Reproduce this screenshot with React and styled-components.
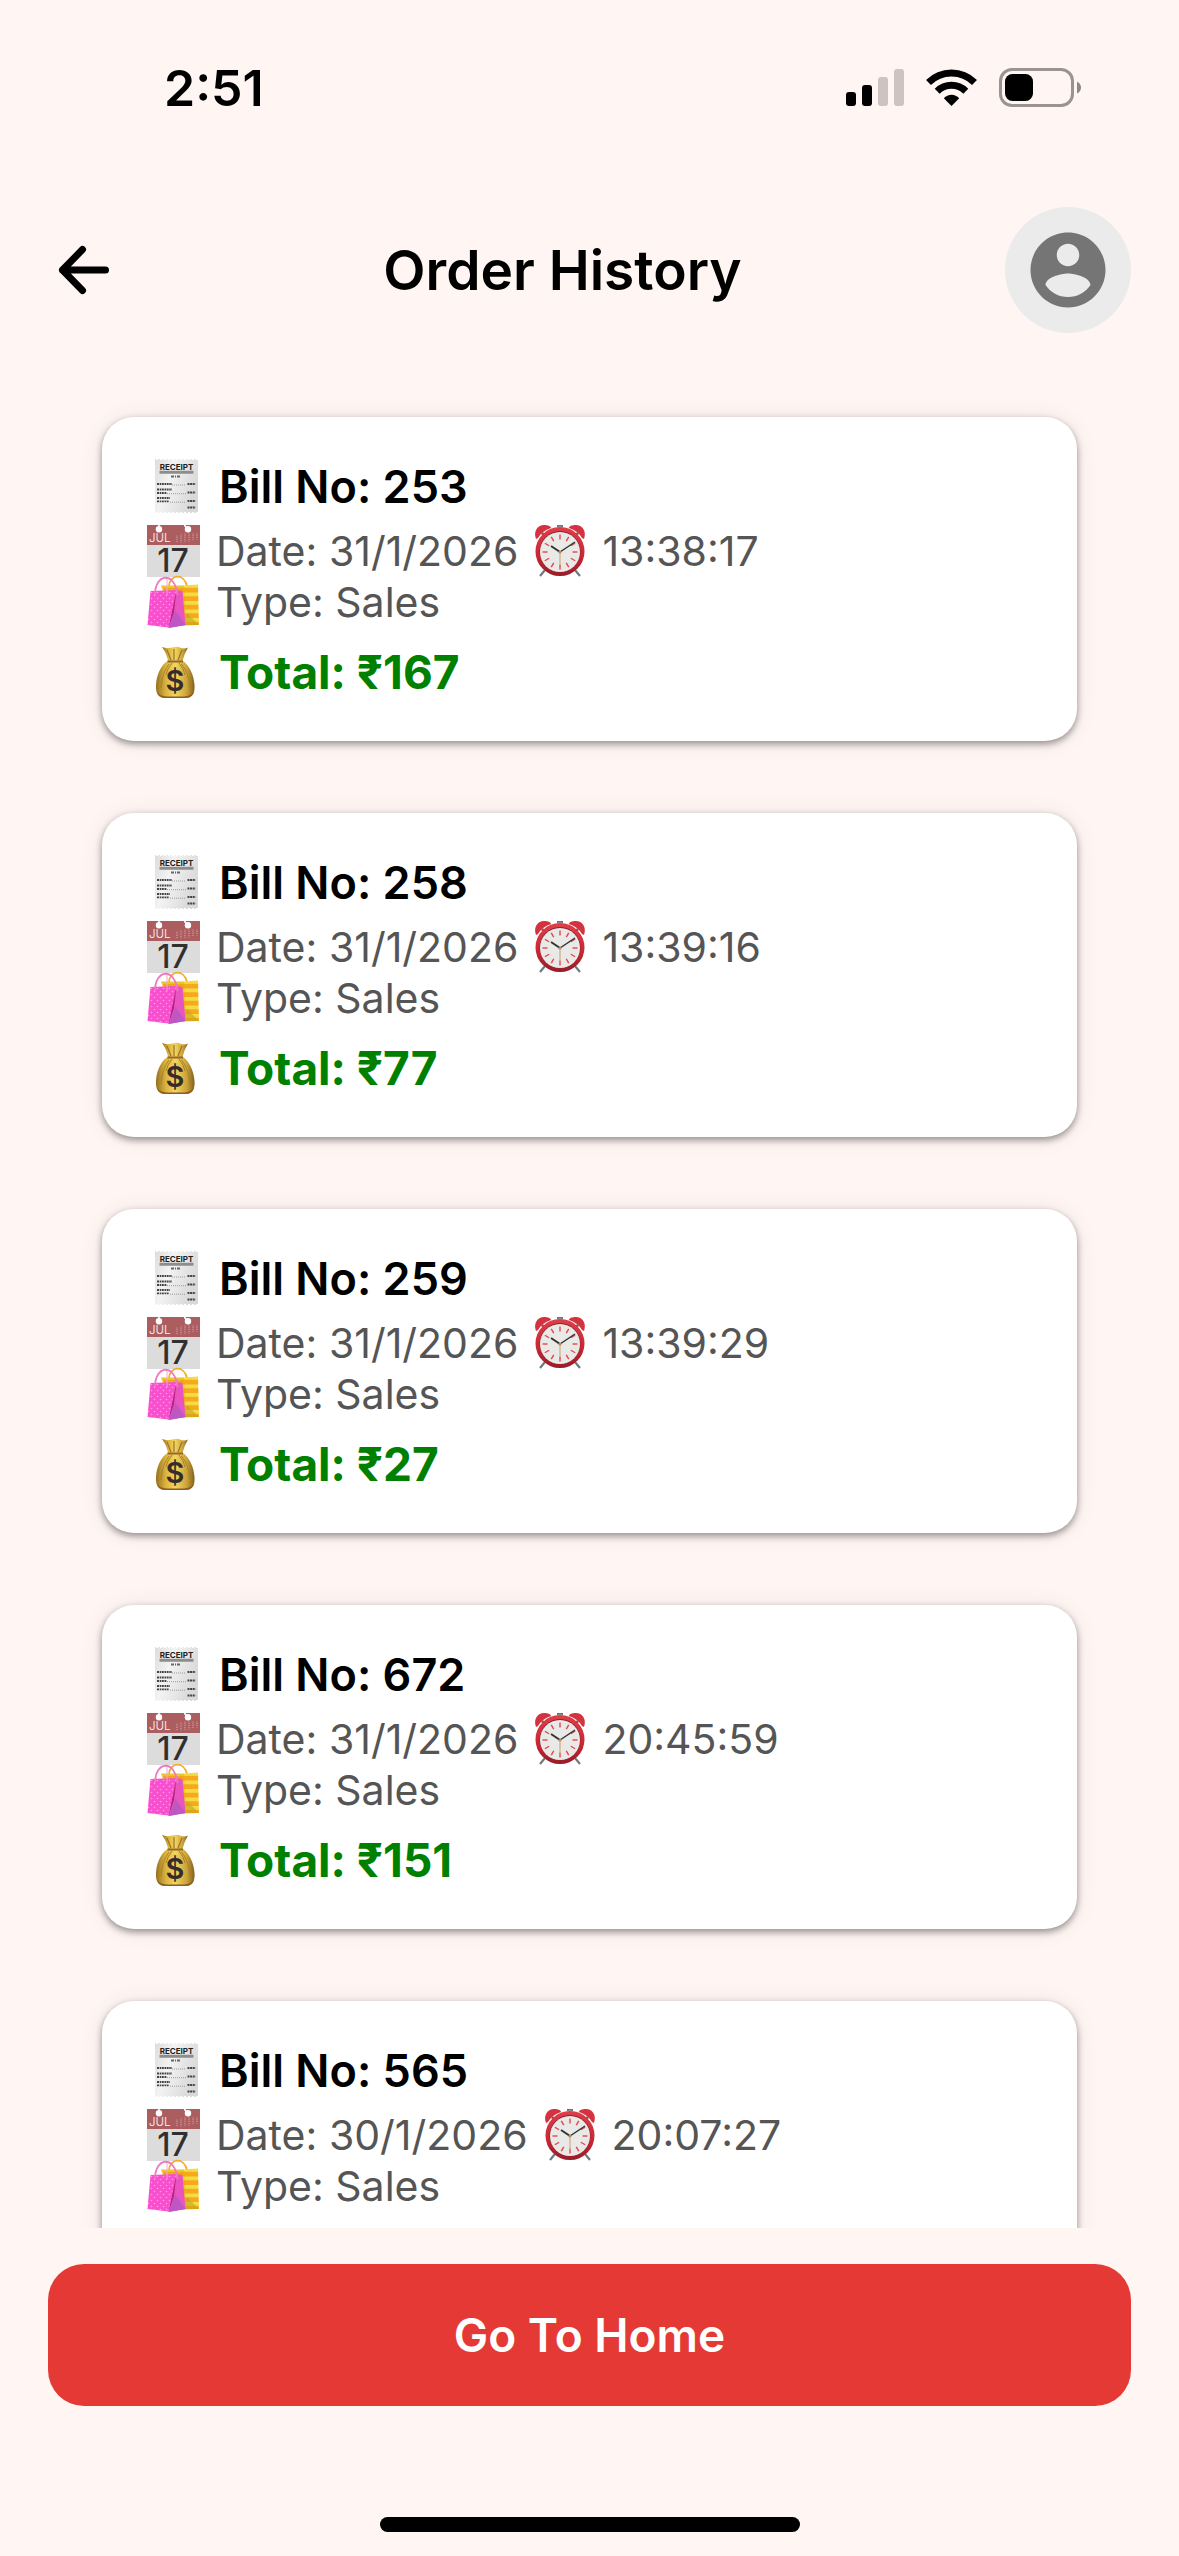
import React from "react";
import styled, { createGlobalStyle, ThemeProvider } from "styled-components";

const theme = {
    colors: {
        background: "#fff5f2",
        black: "#000",
        grey: "#555",
        green: "#008000",
        red: "#e53935",
        avatar: "#ebebeb",
        avatarIcon: "#757575",
    },
};

const orders = [
    { billNo: 253, date: "31/1/2026", time: "13:38:17", type: "Sales", total: 167 },
    { billNo: 258, date: "31/1/2026", time: "13:39:16", type: "Sales", total: 77 },
    { billNo: 259, date: "31/1/2026", time: "13:39:29", type: "Sales", total: 27 },
    { billNo: 672, date: "31/1/2026", time: "20:45:59", type: "Sales", total: 151 },
    { billNo: 565, date: "30/1/2026", time: "20:07:27", type: "Sales" },
];

const GlobalStyle = createGlobalStyle`
    * {
        box-sizing: border-box;
    }
    body {
        margin: 0;
        font-family: Inter, "Liberation Sans", sans-serif;
        background: ${({ theme }) => theme.colors.background};
    }
`;

const StyledScreen = styled.div`
    height: 100vh;
    display: flex;
    flex-direction: column;
    color: ${({ theme }) => theme.colors.black};
`;

const StyledStatusBar = styled.div`
    height: 175px;
    flex-shrink: 0;
    display: flex;
    align-items: center;
    justify-content: space-between;
    padding: 0 98px 0 164px;
`;

const StyledTime = styled.span`
    font-size: 50px;
    font-weight: 600;
`;

const StyledStatusIcons = styled.div`
    display: flex;
    align-items: center;
    gap: 22px;
    svg {
        display: block;
    }
`;

const StyledHeader = styled.header`
    display: flex;
    flex-shrink: 0;
    align-items: center;
    justify-content: space-between;
    padding: 32px 48px 0;
`;

const StyledIconButton = styled.button`
    display: flex;
    padding: 0;
    border: none;
    background: none;
    cursor: pointer;
`;

const StyledAvatarButton = styled(StyledIconButton)`
    width: 126px;
    height: 126px;
    align-items: center;
    justify-content: center;
    border-radius: 50%;
    background: ${({ theme }) => theme.colors.avatar};
    color: ${({ theme }) => theme.colors.avatarIcon};
`;

const StyledTitle = styled.h1`
    margin: 0;
    font-size: 55px;
    font-weight: 600;
    line-height: 72px;
`;

const StyledList = styled.ul`
    flex: 1;
    min-height: 0;
    margin: 0;
    padding: 84px 102px;
    list-style: none;
    display: flex;
    flex-direction: column;
    gap: 72px;
    overflow: hidden auto;
    scrollbar-width: none;
`;

const StyledCard = styled.li`
    flex-shrink: 0;
    min-height: 324px;
    padding: 42px 45px;
    border-radius: 32px;
    background: #fff;
    box-shadow: 0 3px 7px rgba(0, 0, 0, 0.4), 0 1px 24px rgba(0, 0, 0, 0.07);
`;

const StyledRow = styled.div`
    display: flex;
    align-items: center;
    gap: 16px;
    height: 51px;
    font-size: 41px;
    white-space: nowrap;
    color: ${({ theme }) => theme.colors.grey};
    svg {
        display: block;
        flex-shrink: 0;
        overflow: visible;
    }
`;

const StyledBillRow = styled(StyledRow)`
    height: 54px;
    margin-bottom: 12px;
    font-size: 45px;
    font-weight: 600;
    color: ${({ theme }) => theme.colors.black};
`;

const StyledTotalRow = styled(StyledBillRow)`
    margin: 18px 0 0;
    font-size: 46px;
    font-weight: 700;
    color: ${({ theme }) => theme.colors.green};
`;

const StyledFooter = styled.footer`
    flex-shrink: 0;
    display: flex;
    flex-direction: column;
    align-items: center;
    padding: 36px 48px 24px;
`;

const StyledHomeButton = styled.button`
    width: 100%;
    height: 142px;
    border: none;
    border-radius: 36px;
    background: ${({ theme }) => theme.colors.red};
    color: #fff;
    font-family: inherit;
    font-size: 46px;
    font-weight: 600;
    cursor: pointer;
`;

const StyledHomeIndicator = styled.div`
    width: 420px;
    height: 15px;
    margin-top: 111px;
    border-radius: 8px;
    background: ${({ theme }) => theme.colors.black};
`;

function SignalIcon() {
    return (
        <svg width="58" height="37" viewBox="0 0 58 37">
            <rect x="0" y="23" width="10" height="14" rx="3" />
            <rect x="16" y="16" width="10" height="21" rx="3" />
            <rect x="32" y="8" width="10" height="29" rx="3" fill="#cdc3c2" />
            <rect x="48" y="0" width="10" height="37" rx="3" fill="#cdc3c2" />
        </svg>
    );
}

function WifiIcon() {
    return (
        <svg width="51" height="37" viewBox="0 0 51 37">
            <path d="M2.5 13.5A32.5 32.5 0 0 1 48.5 13.5" fill="none" stroke="#000" strokeWidth="7" />
            <path d="M11.2 22.2A20.3 20.3 0 0 1 39.8 22.2" fill="none" stroke="#000" strokeWidth="7" />
            <path d="M25.5 37L17.8 29.2Q21 25.7 25.5 25.7T33.2 29.2Z" />
        </svg>
    );
}

function BatteryIcon() {
    return (
        <svg width="82" height="39" viewBox="0 0 82 39">
            <rect x="1.5" y="1.5" width="72" height="36" rx="11.5" fill="none" stroke="#9a9391" strokeWidth="3" />
            <rect x="6" y="6" width="28" height="27" rx="7.5" />
            <path d="M78 13.5Q82 15.5 82 19.5T78 25.5Z" fill="#8f8886" />
        </svg>
    );
}

function BackIcon() {
    return (
        <svg width="72" height="72" viewBox="0 0 72 72">
            <path
                d="M34.5 15.5L14.5 36L34.5 56.5M14.5 36H57.5"
                fill="none"
                stroke="#000"
                strokeWidth="7"
                strokeLinecap="round"
                strokeLinejoin="round"
            />
        </svg>
    );
}

function AccountIcon() {
    return (
        <svg width="90" height="90" viewBox="0 0 24 24" fill="currentColor">
            <path d="M12 2C6.48 2 2 6.48 2 12s4.48 10 10 10 10-4.48 10-10S17.52 2 12 2zm0 3c1.66 0 3 1.34 3 3s-1.34 3-3 3-3-1.34-3-3 1.34-3 3-3zm0 14.2c-2.5 0-4.71-1.28-6-3.22.03-1.99 4-3.08 6-3.08 1.99 0 5.97 1.09 6 3.08-1.29 1.94-3.5 3.22-6 3.22z" />
        </svg>
    );
}

function ReceiptIcon() {
    return (
        <svg width="56" height="54" viewBox="0 0 56 54">
            <defs>
                <linearGradient id="paper" x1="0" y1="0" x2="1" y2="0.4">
                    <stop offset="0" stopColor="#dcdcdc" />
                    <stop offset="0.4" stopColor="#f3f3f3" />
                    <stop offset="1" stopColor="#d9d9d9" />
                </linearGradient>
            </defs>
            <rect x="8" y="0" width="43" height="54" fill="url(#paper)" />
            <path d="M9 0.5H51M9 53.5H51" stroke="#fff" strokeWidth="1" strokeDasharray="2 2" />
            <text x="29.5" y="11" fontSize="8" fontWeight="700" textAnchor="middle" fill="#222">RECEIPT</text>
            <path d="M12.5 13.3H46.5" stroke="#8d8d8d" strokeWidth="3" />
            <path d="M24 17.5H34" stroke="#666" strokeWidth="2" strokeDasharray="3 1 1 1" />
            <path d="M10 25H25M10 30.5H25M10 34H20M10 39H23M10 42.3H22" stroke="#444" strokeWidth="1.8" strokeDasharray="2 0.7 1.5 0.6" />
            <path d="M40.5 25H48.5M40.5 33.5H48.5M40.5 42H48.5M40.5 48.5H48.5" stroke="#444" strokeWidth="2" strokeDasharray="2 0.6" />
            <path d="M25 26H39M20 34.7H39M23 43.2H39" stroke="#999" strokeWidth="1" strokeDasharray="1 1" />
        </svg>
    );
}

function CalendarIcon() {
    return (
        <svg width="53" height="52" viewBox="0 0 53 52">
            <rect width="53" height="52" fill="#dcdcdc" />
            <rect width="53" height="20" fill="#ab5d60" />
            <path d="M12 0V4M37.5 0L40 4" stroke="#fff" strokeWidth="1.6" />
            <circle cx="12" cy="4.3" r="3.2" fill="#fff" />
            <circle cx="41" cy="4.3" r="3.2" fill="#fff" />
            <path
                d="M30 10.5V17.5M34 9.5V17.5M38 8.5V17.5M42 8.5V16.5M46 8.5V15.5M50 8.5V14.5"
                stroke="#c98f90"
                strokeWidth="1.6"
                strokeDasharray="1 0.8"
            />
            <text x="2" y="17" fontSize="11.5" fill="#f3dfdf">JUL</text>
            <text x="26" y="46.5" fontSize="32" fontWeight="500" textAnchor="middle" fill="#303030">17</text>
        </svg>
    );
}

function BagsIcon() {
    return (
        <svg width="53" height="52" viewBox="0 0 53 52">
            <defs>
                <pattern id="stripes" width="8" height="8.5" y="8" patternUnits="userSpaceOnUse">
                    <rect width="8" height="8.5" fill="#f7a91a" />
                    <rect width="8" height="3.8" fill="#f2dc45" />
                </pattern>
                <pattern id="dots" width="6" height="6" patternUnits="userSpaceOnUse">
                    <circle cx="1.5" cy="1.5" r="0.8" fill="#ff9be6" />
                    <circle cx="4.5" cy="4.5" r="0.8" fill="#ff9be6" />
                </pattern>
            </defs>
            <path d="M22 10C23-2 37-3 40 10" fill="none" stroke="#f2ae2a" strokeWidth="1.8" />
            <path d="M14 9.5L37 9.5L51 8.5L52 49L35 49.5Z" fill="url(#stripes)" />
            <path d="M14 9.5H37L39 44L22 40Z" fill="#e0a411" opacity="0.35" />
            <path d="M40 37L52 49H36Z" fill="#c7a41c" opacity="0.6" />
            <path d="M3.5 15L29.5 14L21.5 51.5L0.5 49Z" fill="#f84fce" />
            <path d="M3.5 15L29.5 14L21.5 51.5L0.5 49Z" fill="url(#dots)" />
            <path d="M29.5 14L35.5 15L38.5 49L21.5 52Z" fill="#e955c0" />
            <path d="M29.5 14L27 36L21.5 52Z" fill="#b81e83" />
            <path d="M28.5 35L38.5 49L21.5 52Z" fill="#bd57c4" />
            <path d="M8 19C8-3 28-5 30.5 19" fill="none" stroke="#ef79bf" strokeWidth="1.8" />
            <path d="M20 19V3" stroke="#f4a6d8" strokeWidth="1" />
        </svg>
    );
}

function ClockIcon() {
    const ticks = [0, 30, 60, 90, 120, 150, 180, 210, 240, 270, 300, 330];

    return (
        <svg width="52" height="52" viewBox="0 0 52 52">
            <defs>
                <linearGradient id="ring" x1="0" y1="0" x2="0" y2="1">
                    <stop offset="0" stopColor="#df3f49" />
                    <stop offset="0.6" stopColor="#c82634" />
                    <stop offset="1" stopColor="#981b28" />
                </linearGradient>
            </defs>
            <path d="M11 45L6 51M41 45L46 51" stroke="#6d7a80" strokeWidth="2.2" />
            <rect x="23" y="0" width="6" height="2.2" fill="#7b6a6a" />
            <path d="M26 1V4" stroke="#999" strokeWidth="3" />
            <path d="M8 8L12 12M44 8L40 12" stroke="#666" strokeWidth="2.5" />
            <path d="M2 14C-1 6 4 0 10 0C14 0 17 1 17 3Q8 6 4 13Z" fill="#d5323f" />
            <path d="M50 14C53 6 48 0 42 0C38 0 35 1 35 3Q44 6 48 13Z" fill="#d5323f" />
            <circle cx="26" cy="26.5" r="24.5" fill="url(#ring)" />
            <circle cx="26" cy="26.5" r="20.5" fill="#8e2430" />
            <circle cx="26" cy="27" r="20" fill="#e9e9e7" />
            {ticks.map((angle) => (
                <path key={angle} d="M26 9.5V14.5" stroke="#e5464c" strokeWidth="1.4" transform={`rotate(${angle} 26 27)`} />
            ))}
            <path d="M26 27V41" stroke="#c7a173" strokeWidth="1" />
            <path d="M17 21L26 27" stroke="#333" strokeWidth="2" />
            <path d="M26 27L41 17" stroke="#333" strokeWidth="1.5" />
            <circle cx="26" cy="27" r="1.5" fill="#b98d5a" />
        </svg>
    );
}

function MoneyBagIcon() {
    return (
        <svg width="56" height="54" viewBox="0 0 56 54">
            <defs>
                <linearGradient id="sack" x1="0" y1="0" x2="1" y2="0">
                    <stop offset="0" stopColor="#96701f" />
                    <stop offset="0.25" stopColor="#d9b33d" />
                    <stop offset="0.5" stopColor="#f3d55f" />
                    <stop offset="0.8" stopColor="#cba238" />
                    <stop offset="1" stopColor="#80601d" />
                </linearGradient>
            </defs>
            <path d="M15 2Q20 4 25 2.5Q30 1 34 3Q38 4 41 2.5Q37 9 35.5 16H21Q20 9 15 2Z" fill="url(#sack)" />
            <path d="M20 5L24 15M27 4V15M35 5L31 15" stroke="#9b7428" strokeWidth="1.2" />
            <path d="M20.5 16C14 20 9.5 30 9 40C8.5 48 11 52.5 17 53H39C46 52.5 48 48 47.5 40C47 30 42 20 36 16Z" fill="url(#sack)" />
            <path d="M22 19Q15 28 14 43M34.5 19Q42 28 43 43M25 18Q20 24 19 30M32 18Q37 24 38 30" fill="none" stroke="#a9812c" strokeWidth="1" />
            <path d="M10 47Q12 53 19 53H38Q45 53 47 47Q43 51 37 51.5H20Q13 51 10 47Z" fill="#8c5e25" />
            <path d="M20.5 16.5H36" stroke="#94682b" strokeWidth="2" />
            <text x="28" y="46" fontSize="29" fontWeight="600" textAnchor="middle" fill="#362c2b">$</text>
        </svg>
    );
}

function StatusBar() {
    return (
        <StyledStatusBar>
            <StyledTime>2:51</StyledTime>
            <StyledStatusIcons>
                <SignalIcon />
                <WifiIcon />
                <BatteryIcon />
            </StyledStatusIcons>
        </StyledStatusBar>
    );
}

function Header(props) {
    const { onBack, onProfile } = props;

    return (
        <StyledHeader>
            <StyledIconButton type="button" aria-label="Back" onClick={onBack}>
                <BackIcon />
            </StyledIconButton>
            <StyledTitle>Order History</StyledTitle>
            <StyledAvatarButton type="button" aria-label="Profile" onClick={onProfile}>
                <AccountIcon />
            </StyledAvatarButton>
        </StyledHeader>
    );
}

function OrderCard(props) {
    const { billNo, date, time, type, total } = props.order;

    return (
        <StyledCard>
            <StyledBillRow>
                <ReceiptIcon />
                <span>Bill No: {billNo}</span>
            </StyledBillRow>
            <StyledRow>
                <CalendarIcon />
                <span>Date: {date}</span>
                <ClockIcon />
                <span>{time}</span>
            </StyledRow>
            <StyledRow>
                <BagsIcon />
                <span>Type: {type}</span>
            </StyledRow>
            {total !== undefined && (
                <StyledTotalRow>
                    <MoneyBagIcon />
                    <span>Total: ₹{total}</span>
                </StyledTotalRow>
            )}
        </StyledCard>
    );
}

function App() {
    const handleNavigate = (e) => {
        e.preventDefault();
    };

    return (
        <ThemeProvider theme={theme}>
            <GlobalStyle />
            <StyledScreen>
                <StatusBar />
                <Header onBack={handleNavigate} onProfile={handleNavigate} />
                <StyledList>
                    {orders.map((order) => (
                        <OrderCard key={order.billNo} order={order} />
                    ))}
                </StyledList>
                <StyledFooter>
                    <StyledHomeButton type="button" onClick={handleNavigate}>Go To Home</StyledHomeButton>
                    <StyledHomeIndicator />
                </StyledFooter>
            </StyledScreen>
        </ThemeProvider>
    );
}

export default App;
